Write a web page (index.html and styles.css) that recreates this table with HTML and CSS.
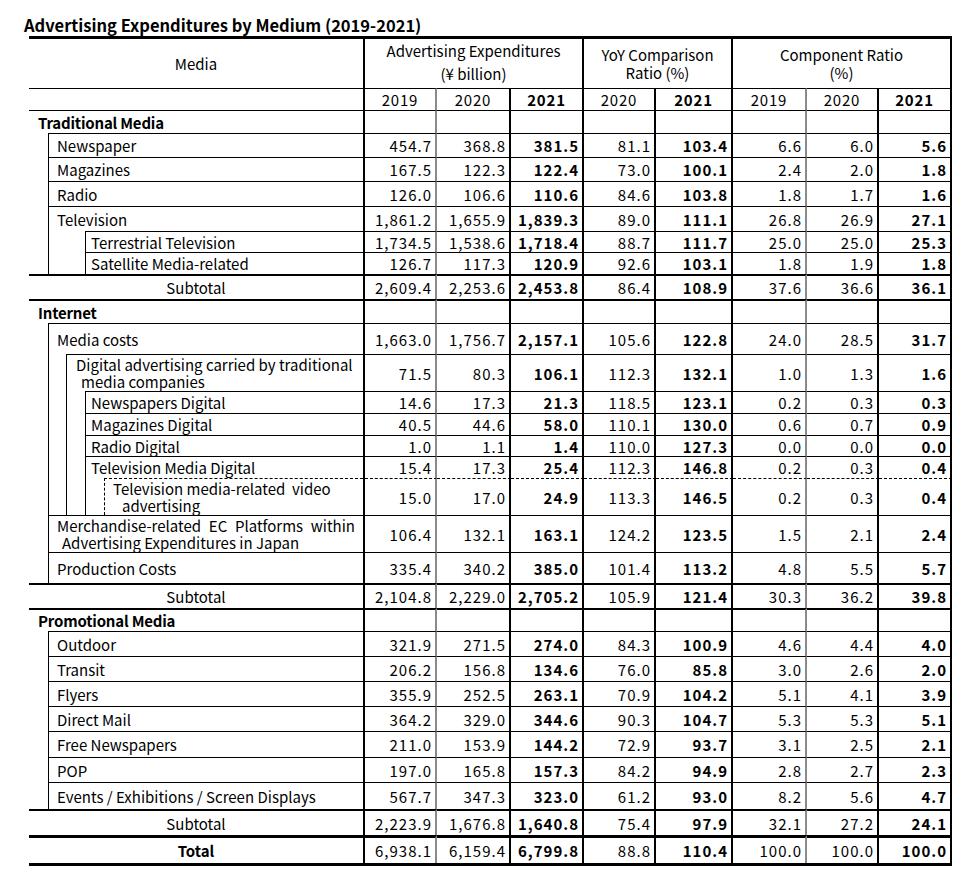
FILE: index.html
```html
<!DOCTYPE html>
<html lang="en">
<head>
<meta charset="utf-8">
<title>Advertising Expenditures by Medium (2019-2021)</title>
<link rel="stylesheet" href="styles.css">
</head>
<body>
<div class="page">
  <h1 class="title">Advertising Expenditures by Medium (2019-2021)</h1>
  <div class="tbl">
    <div class="r h49 hd1">
      <div class="m hm">Media</div>
      <div class="c hc s3 lh23">Advertising Expenditures<br>(¥ billion)</div>
      <div class="c hc s2">YoY Comparison<br>Ratio (%)</div>
      <div class="c hc s3">Component Ratio<br>(%)</div>
    </div>
    <div class="r h22">
      <div class="m top"></div>
      <div class="c ctr g">2019</div><div class="c ctr">2020</div><div class="c ctr b">2021</div>
      <div class="c ctr">2020</div><div class="c ctr b">2021</div>
      <div class="c ctr g">2019</div><div class="c ctr">2020</div><div class="c ctr b">2021</div>
    </div>

    <div class="r h23">
      <div class="m top sec">Traditional Media</div>
      <div class="c g"></div><div class="c"></div><div class="c"></div><div class="c"></div><div class="c"></div><div class="c g"></div><div class="c"></div><div class="c"></div>
    </div>
    <div class="r h24">
      <div class="m"><div class="x a1 p8">Newspaper</div></div>
      <div class="c g">454.7</div><div class="c">368.8</div><div class="c b">381.5</div><div class="c">81.1</div><div class="c b">103.4</div><div class="c g">6.6</div><div class="c">6.0</div><div class="c b">5.6</div>
    </div>
    <div class="r h24">
      <div class="m"><div class="x a1 p8">Magazines</div></div>
      <div class="c g">167.5</div><div class="c">122.3</div><div class="c b">122.4</div><div class="c">73.0</div><div class="c b">100.1</div><div class="c g">2.4</div><div class="c">2.0</div><div class="c b">1.8</div>
    </div>
    <div class="r h25">
      <div class="m"><div class="x a1 p8">Radio</div></div>
      <div class="c g">126.0</div><div class="c">106.6</div><div class="c b">110.6</div><div class="c">84.6</div><div class="c b">103.8</div><div class="c g">1.8</div><div class="c">1.7</div><div class="c b">1.6</div>
    </div>
    <div class="r h25">
      <div class="m"><div class="x a1 p8">Television</div></div>
      <div class="c g">1,861.2</div><div class="c">1,655.9</div><div class="c b">1,839.3</div><div class="c">89.0</div><div class="c b">111.1</div><div class="c g">26.8</div><div class="c">26.9</div><div class="c b">27.1</div>
    </div>
    <div class="r h21">
      <div class="m"><div class="v a1"><div class="x a2t p5">Terrestrial Television</div></div></div>
      <div class="c g">1,734.5</div><div class="c">1,538.6</div><div class="c b">1,718.4</div><div class="c">88.7</div><div class="c b">111.7</div><div class="c g">25.0</div><div class="c">25.0</div><div class="c b">25.3</div>
    </div>
    <div class="r h22">
      <div class="m"><div class="v a1"><div class="x a2t p5">Satellite Media-related</div></div></div>
      <div class="c g">126.7</div><div class="c">117.3</div><div class="c b">120.9</div><div class="c">92.6</div><div class="c b">103.1</div><div class="c g">1.8</div><div class="c">1.9</div><div class="c b">1.8</div>
    </div>
    <div class="r h25 t2">
      <div class="m top mid">Subtotal</div>
      <div class="c g">2,609.4</div><div class="c">2,253.6</div><div class="c b">2,453.8</div><div class="c">86.4</div><div class="c b">108.9</div><div class="c g">37.6</div><div class="c">36.6</div><div class="c b">36.1</div>
    </div>

    <div class="r h24 t2">
      <div class="m top sec">Internet</div>
      <div class="c g"></div><div class="c"></div><div class="c"></div><div class="c"></div><div class="c"></div><div class="c g"></div><div class="c"></div><div class="c"></div>
    </div>
    <div class="r h31">
      <div class="m"><div class="x a1 p8">Media costs</div></div>
      <div class="c g">1,663.0</div><div class="c">1,756.7</div><div class="c b">2,157.1</div><div class="c">105.6</div><div class="c b">122.8</div><div class="c g">24.0</div><div class="c">28.5</div><div class="c b">31.7</div>
    </div>
    <div class="r h37">
      <div class="m"><div class="v a1"><div class="x a2 two">
        <div class="ln l9">Digital advertising carried by traditional</div>
        <div class="ln l14">media companies</div>
      </div></div></div>
      <div class="c g">71.5</div><div class="c">80.3</div><div class="c b">106.1</div><div class="c">112.3</div><div class="c b">132.1</div><div class="c g">1.0</div><div class="c">1.3</div><div class="c b">1.6</div>
    </div>
    <div class="r h22">
      <div class="m"><div class="v a1"><div class="v a2"><div class="x a3 p5">Newspapers Digital</div></div></div></div>
      <div class="c g">14.6</div><div class="c">17.3</div><div class="c b">21.3</div><div class="c">118.5</div><div class="c b">123.1</div><div class="c g">0.2</div><div class="c">0.3</div><div class="c b">0.3</div>
    </div>
    <div class="r h22">
      <div class="m"><div class="v a1"><div class="v a2"><div class="x a3 p5">Magazines Digital</div></div></div></div>
      <div class="c g">40.5</div><div class="c">44.6</div><div class="c b">58.0</div><div class="c">110.1</div><div class="c b">130.0</div><div class="c g">0.6</div><div class="c">0.7</div><div class="c b">0.9</div>
    </div>
    <div class="r h21">
      <div class="m"><div class="v a1"><div class="v a2"><div class="x a3 p5">Radio Digital</div></div></div></div>
      <div class="c g">1.0</div><div class="c">1.1</div><div class="c b">1.4</div><div class="c">110.0</div><div class="c b">127.3</div><div class="c g">0.0</div><div class="c">0.0</div><div class="c b">0.0</div>
    </div>
    <div class="r h22">
      <div class="m"><div class="v a1"><div class="v a2"><div class="x a3 p5">Television Media Digital</div></div></div></div>
      <div class="c g">15.4</div><div class="c">17.3</div><div class="c b">25.4</div><div class="c">112.3</div><div class="c b">146.8</div><div class="c g">0.2</div><div class="c">0.3</div><div class="c b">0.4</div>
    </div>
    <div class="r h37 dash">
      <div class="m"><div class="v a1"><div class="v a2"><div class="v a3"><div class="x a4 two dsh">
        <div class="ln l8">Television media-related&nbsp; video</div>
        <div class="ln l17">advertising</div>
      </div></div></div></div></div>
      <div class="c g">15.0</div><div class="c">17.0</div><div class="c b">24.9</div><div class="c">113.3</div><div class="c b">146.5</div><div class="c g">0.2</div><div class="c">0.3</div><div class="c b">0.4</div>
    </div>
    <div class="r h37">
      <div class="m"><div class="x a1 two">
        <div class="ln jl">Merchandise-related EC Platforms within</div>
        <div class="ln l13">Advertising Expenditures in Japan</div>
      </div></div>
      <div class="c g">106.4</div><div class="c">132.1</div><div class="c b">163.1</div><div class="c">124.2</div><div class="c b">123.5</div><div class="c g">1.5</div><div class="c">2.1</div><div class="c b">2.4</div>
    </div>
    <div class="r h31">
      <div class="m"><div class="x a1 p8">Production Costs</div></div>
      <div class="c g">335.4</div><div class="c">340.2</div><div class="c b">385.0</div><div class="c">101.4</div><div class="c b">113.2</div><div class="c g">4.8</div><div class="c">5.5</div><div class="c b">5.7</div>
    </div>
    <div class="r h25 t2">
      <div class="m top mid">Subtotal</div>
      <div class="c g">2,104.8</div><div class="c">2,229.0</div><div class="c b">2,705.2</div><div class="c">105.9</div><div class="c b">121.4</div><div class="c g">30.3</div><div class="c">36.2</div><div class="c b">39.8</div>
    </div>

    <div class="r h23 t2">
      <div class="m top sec">Promotional Media</div>
      <div class="c g"></div><div class="c"></div><div class="c"></div><div class="c"></div><div class="c"></div><div class="c g"></div><div class="c"></div><div class="c"></div>
    </div>
    <div class="r h25">
      <div class="m"><div class="x a1 p8">Outdoor</div></div>
      <div class="c g">321.9</div><div class="c">271.5</div><div class="c b">274.0</div><div class="c">84.3</div><div class="c b">100.9</div><div class="c g">4.6</div><div class="c">4.4</div><div class="c b">4.0</div>
    </div>
    <div class="r h25">
      <div class="m"><div class="x a1 p8">Transit</div></div>
      <div class="c g">206.2</div><div class="c">156.8</div><div class="c b">134.6</div><div class="c">76.0</div><div class="c b">85.8</div><div class="c g">3.0</div><div class="c">2.6</div><div class="c b">2.0</div>
    </div>
    <div class="r h25">
      <div class="m"><div class="x a1 p8">Flyers</div></div>
      <div class="c g">355.9</div><div class="c">252.5</div><div class="c b">263.1</div><div class="c">70.9</div><div class="c b">104.2</div><div class="c g">5.1</div><div class="c">4.1</div><div class="c b">3.9</div>
    </div>
    <div class="r h25">
      <div class="m"><div class="x a1 p8">Direct Mail</div></div>
      <div class="c g">364.2</div><div class="c">329.0</div><div class="c b">344.6</div><div class="c">90.3</div><div class="c b">104.7</div><div class="c g">5.3</div><div class="c">5.3</div><div class="c b">5.1</div>
    </div>
    <div class="r h26">
      <div class="m"><div class="x a1 p8">Free Newspapers</div></div>
      <div class="c g">211.0</div><div class="c">153.9</div><div class="c b">144.2</div><div class="c">72.9</div><div class="c b">93.7</div><div class="c g">3.1</div><div class="c">2.5</div><div class="c b">2.1</div>
    </div>
    <div class="r h25">
      <div class="m"><div class="x a1 p8">POP</div></div>
      <div class="c g">197.0</div><div class="c">165.8</div><div class="c b">157.3</div><div class="c">84.2</div><div class="c b">94.9</div><div class="c g">2.8</div><div class="c">2.7</div><div class="c b">2.3</div>
    </div>
    <div class="r h27">
      <div class="m"><div class="x a1 p8">Events / Exhibitions / Screen Displays</div></div>
      <div class="c g">567.7</div><div class="c">347.3</div><div class="c b">323.0</div><div class="c">61.2</div><div class="c b">93.0</div><div class="c g">8.2</div><div class="c">5.6</div><div class="c b">4.7</div>
    </div>
    <div class="r h26 t2">
      <div class="m top mid">Subtotal</div>
      <div class="c g">2,223.9</div><div class="c">1,676.8</div><div class="c b">1,640.8</div><div class="c">75.4</div><div class="c b">97.9</div><div class="c g">32.1</div><div class="c">27.2</div><div class="c b">24.1</div>
    </div>
    <div class="r h28 t3">
      <div class="m top mid b">Total</div>
      <div class="c g">6,938.1</div><div class="c">6,159.4</div><div class="c b">6,799.8</div><div class="c">88.8</div><div class="c b">110.4</div><div class="c g">100.0</div><div class="c">100.0</div><div class="c b">100.0</div>
    </div>
  </div>
</div>
</body>
</html>
```

FILE: styles.css
```css
* { box-sizing: border-box; }
html, body { margin: 0; background: #fff; }
body {
  color: #000;
  font-family: "Noto Sans CJK JP", "Noto Sans", sans-serif;
  font-size: 15px;
}
.page { padding: 14px 0 0 24px; }
.title {
  margin: 0;
  font-size: 16.5px;
  font-weight: 700;
  line-height: 22px;
  height: 22px;
  white-space: nowrap;
}
.tbl {
  margin-left: 5px;
  width: 923px;
  border-top: 3px solid #000;
  border-bottom: 3px solid #000;
}
.r {
  display: grid;
  grid-template-columns: 336px 72px 74px 73px 72px 77px 74px 72px 73px;
}
.h21 { height: 21px; } .h22 { height: 22px; } .h23 { height: 23px; }
.h24 { height: 24px; } .h25 { height: 25px; } .h26 { height: 26px; }
.h27 { height: 27px; } .h28 { height: 28px; } .h31 { height: 31px; }
.h37 { height: 37px; } .h49 { height: 49px; }

.c {
  border-top: 1px solid #000;
  border-right: 2px solid #000;
  display: flex;
  align-items: center;
  justify-content: flex-end;
  padding-right: 3px;
  letter-spacing: 1px;
  white-space: nowrap;
}
.c.g { border-right-color: #8a8a8a; }
.c.ctr { justify-content: center; padding-right: 0; letter-spacing: 0.8px; }
.b { font-weight: 700; }
.hd1 .c { border-top: 0; }
.hc {
  justify-content: center;
  text-align: center;
  padding: 0;
  letter-spacing: 0;
  line-height: 18px;
}
.hc.lh23 { line-height: 23px; padding-bottom: 3px; }
.s2 { grid-column: span 2; }
.s3 { grid-column: span 3; }

.r.t2 .c, .r.t2 .top { border-top-width: 2px; }
.r.t3 .c, .r.t3 .top { border-top-width: 3px; }
.r.dash .c { border-top-style: dashed; }

.m {
  border-right: 2px solid #000;
  display: flex;
  min-width: 0;
  white-space: nowrap;
}
.m.top { border-top: 1px solid #000; align-items: center; }
.hm { align-items: center; justify-content: center; }
.sec { padding-left: 9px; font-weight: 700; letter-spacing: -0.2px; }
.mid { justify-content: center; }

.v { display: flex; flex: 1; border-left: 1px solid #000; }
.x {
  flex: 1;
  display: flex;
  align-items: center;
  border-left: 1px solid #000;
  border-top: 1px solid #000;
}
.x.two { flex-direction: column; align-items: stretch; justify-content: center; }
.x.dsh { border-left-style: dashed; border-top-style: dashed; }
.ln { line-height: 17px; }
.l8 { padding-left: 8px; }
.l9 { padding-left: 9px; }
.l13 { padding-left: 13px; }
.l14 { padding-left: 14px; }
.l17 { padding-left: 17px; }
.jl { padding-left: 8px; padding-right: 8px; text-align: justify; text-align-last: justify; }

.a1 { margin-left: 19px; }
.a2t { margin-left: 36px; }
.a2 { margin-left: 17px; }
.a3 { margin-left: 18px; }
.a4 { margin-left: 18px; }
.p8 { padding-left: 8px; }
.p5 { padding-left: 5px; }
```
